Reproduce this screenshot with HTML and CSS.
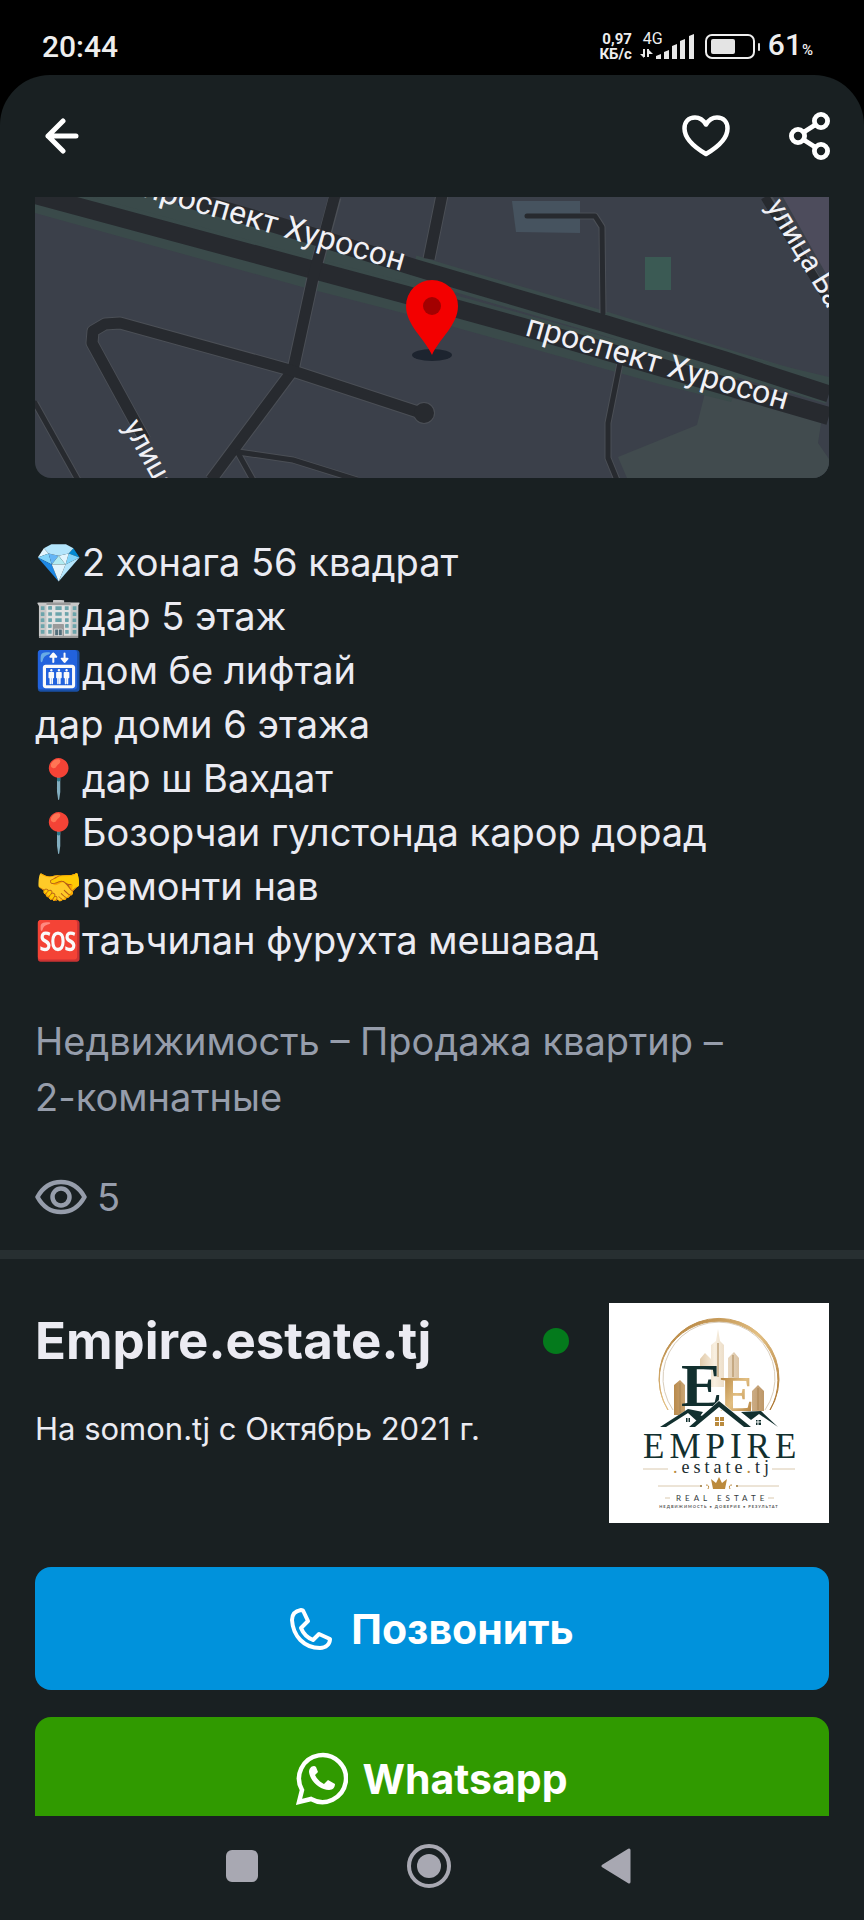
FILE: index.html
```html
<!DOCTYPE html>
<html lang="ru">
<head>
<meta charset="utf-8">
<meta name="viewport" content="width=device-width, initial-scale=1">
<title>Empire.estate.tj</title>
<link rel="stylesheet" href="styles.css">
</head>
<body>
<div class="screen">
  <header class="status">
    <time class="clock">20:44</time>
    <div class="indicators">
      <div class="speed"><span>0,97</span><span>КБ/с</span></div>
      <div class="network">
        <span class="network-type">4G</span>
        <svg class="signal" width="54" height="26" viewBox="0 0 54 26" aria-hidden="true">
          <path d="M4 15v8M8 15v8" stroke="#e8e8e8" stroke-width="2"/>
          <path d="M0 20h4v4zM8 15l5 5H8z" fill="#e8e8e8"/>
          <path d="M16 22l5-2v5h-5zM24 18l5-2v9h-5zM32 12l5-2v15h-5zM40 7l5-2v20h-5zM49 2l5-2v25h-5z" fill="#e8e8e8"/>
        </svg>
      </div>
      <svg class="battery" width="56" height="26" viewBox="0 0 56 26" aria-label="Заряд">
        <rect x="1" y="1" width="48" height="23" rx="6" fill="none" stroke="#eee" stroke-width="2"/>
        <rect x="6" y="5" width="24" height="15" rx="2" fill="#e4e4e4"/>
        <rect x="53" y="9" width="2" height="8" rx="1" fill="#e4e4e4"/>
      </svg>
      <div class="charge">61<span>%</span></div>
    </div>
  </header>

  <div class="app">
    <nav class="toolbar">
      <button class="icon-button" type="button" aria-label="Назад">
        <svg width="34" height="36" viewBox="0 0 34 36"><path d="M18 3L3 18l15 15M3 18h28" fill="none" stroke="#fff" stroke-width="5" stroke-linecap="round" stroke-linejoin="round"/></svg>
      </button>
      <div class="toolbar-actions">
        <button class="icon-button" type="button" aria-label="В избранное">
          <svg width="48" height="42" viewBox="0 0 48 42"><path d="M24 9.500C21 4.500 17 2.500 13 2.500 6.500 2.500 2.500 7 2.500 13.500 2.500 24 12 32 24 39 36 32 45.500 24 45.500 13.500 45.500 7 41.500 2.500 35 2.500 31 2.500 27 4.500 24 9.500z" fill="none" stroke="#fff" stroke-width="4.500" stroke-linejoin="round"/></svg>
        </button>
        <button class="icon-button" type="button" aria-label="Поделиться">
          <svg width="42" height="48" viewBox="0 0 42 48"><g fill="none" stroke="#fff" stroke-width="4.800"><circle cx="32" cy="9" r="6.600"/><circle cx="9" cy="24" r="6.600"/><circle cx="32" cy="39" r="6.600"/><path d="M15 20l11-7M15 28l11 7"/></g></svg>
        </button>
      </div>
    </nav>

    <main class="content">
      <section class="ad">
        <svg class="map" viewBox="0 0 794 281" preserveAspectRatio="xMidYMid slice" role="img" aria-label="Карта">
          <rect width="794" height="281" fill="#3b404a"/>
          <path d="M670 196L662 228 583 260 592 281H794V262L783 246 787 220z" fill="#414b4e"/>
          <path d="M748 0H794V82z" fill="#4d4c5c"/>
          <path d="M477 4H545V36L481 35z" fill="#46535f"/>
          <path d="M610 60h26v33h-26z" fill="#3b5a54"/>
          <path d="M45 0H120L285 50 420 90 420 108 280 66z" fill="#3a4a4a"/>
          <path d="M0 0L275 76 372 101 488 133 628 172 700 190" fill="none" stroke="#3a4a4a" stroke-width="31"/>
          <path d="M378 70L425 84 568 126 700 167 794 195" fill="none" stroke="#3b4b4b" stroke-width="24"/>
          <path d="M640 143L794 180V192L640 150z" fill="#3a4a4a"/>
          <g fill="none" stroke="#4b4f56" stroke-linejoin="round">
            <path d="M300 0L278 81 258 173 176 283M407 -2L394 62" stroke-width="13"/>
            <path d="M110 243L57 146 58 134 70 127 85 126 255 173 386 216" stroke-width="13"/>
            <path d="M0 206L43 283M203 255L258 263 322 283M203 256L218 283M545 19H560L567 30 568 116M585 166L573 226V261L582 283" stroke-width="7"/>
            <path d="M732 0L794 105" stroke-width="10"/>
          </g>
          <circle cx="389" cy="216" r="11" fill="#4b4f56"/>
          <g fill="none" stroke="#272a2f" stroke-linejoin="round">
            <path d="M0 -2L275 72 372 98 488 130 628 171 794 219" stroke-width="18"/>
            <path d="M145 0L242 28 378 70 425 84 568 126 690 163 794 197" stroke-width="17"/>
            <path d="M300 -2L278 81 258 173 176 283M407 -2L394 62" stroke-width="11"/>
            <path d="M110 243L57 146 58 134 70 127 85 126 255 173 386 216" stroke-width="11"/>
            <path d="M0 206L43 283M203 255L258 263 322 283M203 256L218 283M492 19H560L567 30 568 116M585 166L573 226V261L582 283" stroke-width="5" stroke-linecap="round"/>
            <path d="M730 0L794 105" stroke-width="9"/>
          </g>
          <circle cx="389" cy="216" r="10" fill="#272a2f"/>
          <g class="street" fill="#f1f1f6">
            <text class="street-major" transform="translate(367 74) rotate(16)" text-anchor="end">проспект Хуросон</text>
            <text class="street-major" transform="translate(489 138) rotate(16)">проспект Хуросон</text>
            <text class="street-minor" transform="translate(731 9) rotate(59)">улица Ба</text>
            <text class="street-minor" transform="translate(88 229) rotate(61)">улица</text>
          </g>
          <ellipse cx="397" cy="158" rx="20" ry="6" fill="#1d242f"/>
          <path d="M397 158C390 142 371 128 371 109a26 26 0 0 1 52 0C423 128 404 142 397 158z" fill="#f30000"/>
          <circle cx="397" cy="109" r="9" fill="#a30000"/>
        </svg>

        <p class="description">💎2 хонага 56 квадрат<br>🏢дар 5 этаж<br>🛗дом бе лифтай<br>дар доми 6 этажа<br>📍дар ш Вахдат<br>📍Бозорчаи гулстонда карор дорад<br>🤝ремонти нав<br>🆘таъчилан фурухта мешавад</p>
        <p class="category">Недвижимость – Продажа квартир –<br>2-комнатные</p>
        <p class="views">
          <svg width="52" height="36" viewBox="0 0 52 36" aria-label="Просмотры"><g fill="none" stroke="#969dab" stroke-width="4.500"><path d="M2.500 18C8 8 16 3 26 3s18 5 23.500 15C44 28 36 33 26 33S8 28 2.500 18z" stroke-linejoin="round"/><circle cx="26" cy="18" r="8.500"/></g></svg>
          <span>5</span>
        </p>
      </section>

      <section class="seller">
        <div class="seller-card">
          <div class="seller-info">
            <div class="seller-head"><h2>Empire.estate.tj</h2><span class="online"></span></div>
            <p>На somon.tj с Октябрь 2021 г.</p>
          </div>
          <svg class="logo" width="220" height="220" viewBox="0 0 220 220" role="img" aria-label="Empire.estate.tj">
            <defs>
              <linearGradient id="gold" x1="0" y1="0" x2="1" y2="1"><stop offset="0" stop-color="#ab762f"/><stop offset=".5" stop-color="#e2bf83"/><stop offset="1" stop-color="#a8712b"/></linearGradient>
              <linearGradient id="tower" x1="0" y1="0" x2="1" y2="0"><stop offset="0" stop-color="#b98a4c"/><stop offset=".45" stop-color="#f8efe0"/><stop offset="1" stop-color="#bd9768"/></linearGradient>
            </defs>
            <rect width="220" height="220" fill="#fff"/>
            <path d="M59 107A60 60 0 1 1 161 107A59 59 0 0 0 110 18.500A58 58 0 0 0 59 107z" fill="url(#gold)" stroke="url(#gold)" stroke-width="1"/>
            <path d="M64 107A56 56 0 1 1 156 107" fill="none" stroke="#d9cdbb" stroke-width="1"/>
            <path d="M109 26l2 12 4 4v42H102V42l5-4zM119 55l6-6 5 6v20h-11zM91 56l5-6 6 6v8H91zM65 82l6-5 5 5v30H65zM143 88l6-6 6 6v20h-12z" fill="url(#tower)"/>
            <path d="M109 40v34M124 52v22M71 80v30M149 85v22" stroke="#a98453" stroke-width="1"/>
            <text class="logo-initial" x="72" y="103" font-size="62" fill="#12302f">E</text>
            <text class="logo-initial" x="111" y="108" font-size="51" fill="url(#gold)">E</text>
            <path d="M51 124L79 106 93 112 82 124 110 97 142 124 110 106 90 124H84zM132 108L152 108 170 124 150 112 142 117z" fill="#fff"/>
            <path d="M51 124L79 106 93 113 90 120 79 110 57 124zM79 106L94 109 89 116zM132 109L152 108 169 124 150 111 142 117zM80 124L110 98 142 124H135L110 104 86 124z" fill="#12302f"/>
            <path d="M106 114h4v4h-4zM111 114h4v4h-4zM106 119h4v4h-4zM111 119h4v4h-4z" fill="#b98a3e"/>
            <path d="M77 115h4v4h-4zM147 117h5v5h-5z" fill="#12302f"/>
            <path d="M147 119h5M149 117v5M79 115v4" stroke="#fff" stroke-width="1"/>
            <text class="logo-name" x="34" y="155">EMPIRE</text>
            <text class="logo-domain" x="64" y="170"><tspan fill="#b98a3e">.</tspan>estate<tspan fill="#b98a3e">.</tspan>tj</text>
            <path d="M34 166H59M163 166H186M49 183H91M129 183H170M56 195H61M159 195H165" stroke="#dac9ae" stroke-width="1"/>
            <path d="M102 176l5 4 3-6 3 6 5-4-2 10h-12z" fill="#bb8a3d"/>
            <path d="M97 182q4 0 2 4M123 182q-4 0-2 4" fill="none" stroke="#bb8a3d"/>
            <circle cx="92" cy="183" r="1" fill="#99712f"/><circle cx="128" cy="183" r="1" fill="#99712f"/>
            <text class="logo-line" x="67" y="198">REAL ESTATE</text>
            <text class="logo-motto" x="110" y="205" text-anchor="middle">НЕДВИЖИМОСТЬ • ДОВЕРИЕ • РЕЗУЛЬТАТ</text>
          </svg>
        </div>
        <div class="actions">
          <button class="action call" type="button">
            <svg width="42" height="42" viewBox="0 0 42 42"><path d="M11 2C5 3 2 7 2 12 3 28 14 40 30 40c6 0 10-4 10-9L29 26l-6 6C18 30 13 25 11 20l7-7L13 2.500Q12 2 11 2z" fill="none" stroke="#fff" stroke-width="4" stroke-linejoin="round"/></svg>
            <span>Позвонить</span>
          </button>
          <button class="action whatsapp" type="button">
            <svg width="52" height="54" viewBox="0 0 52 54"><path d="M3 50L6 38A23.500 23.500 0 1 1 15 47z" fill="none" stroke="#fff" stroke-width="4.500" stroke-linejoin="miter"/><path d="M18 14c-3 0-5 3-5 6 1 9 11 18 20 18 4 0 6-3 6-6l-7-4-4 4c-4-2-7-5-9-9l3-3-2-5q-1-1-2-1z" fill="#fff"/></svg>
            <span>Whatsapp</span>
          </button>
        </div>
      </section>
    </main>
  </div>

  <nav class="system-nav">
    <button type="button" aria-label="Недавние"><svg width="32" height="32" viewBox="0 0 32 32"><rect width="32" height="32" rx="6" fill="#a8a8b2"/></svg></button>
    <button type="button" aria-label="Домой"><svg width="44" height="44" viewBox="0 0 44 44"><circle cx="22" cy="22" r="20" fill="none" stroke="#a8a8b2" stroke-width="4"/><circle cx="22" cy="22" r="12" fill="#a8a8b2"/></svg></button>
    <button type="button" aria-label="Назад"><svg width="30" height="38" viewBox="0 0 30 38"><path d="M2 19L28 3v32z" fill="#a8a8b2" stroke="#a8a8b2" stroke-width="3" stroke-linejoin="round"/></svg></button>
  </nav>
</div>
</body>
</html>
```
FILE: styles.css
```css
* { box-sizing: border-box; }
body { margin: 0; background: #000; color: #ebebf2; font-family: Inter, "Noto Sans", sans-serif; }
h2, p { margin: 0; }
svg { display: block; flex: none; }
button { margin: 0; padding: 0; border: 0; background: none; color: inherit; font: inherit; cursor: pointer; }

.screen { display: flex; flex-direction: column; height: 100vh; background: #000; }

.status { display: flex; flex: none; justify-content: space-between; align-items: center; height: 75px; padding: 19px 51px 0 42px; font-family: Roboto, sans-serif; color: #eee; }
.clock { font-size: 30px; line-height: 36px; font-weight: 500; }
.indicators { display: flex; align-items: center; }
.speed { display: flex; flex-direction: column; align-items: flex-end; margin-right: 8px; font-size: 15px; line-height: 15px; font-weight: 700; }
.network { position: relative; margin-right: 11px; }
.network-type { position: absolute; left: 3px; top: -3px; font-size: 16px; line-height: 16px; }
.battery { margin-right: 7px; }
.charge { font-size: 30px; line-height: 36px; font-weight: 500; }
.charge span { font-size: 15px; }

.app { display: flex; flex: 1; flex-direction: column; min-height: 0; border-radius: 50px 50px 0 0; background: #192022; overflow: hidden; }
.toolbar { display: flex; flex: none; justify-content: space-between; align-items: center; height: 122px; padding: 0 33px 0 45px; }
.toolbar-actions { display: flex; align-items: center; gap: 59px; }

.content { flex: 1; min-height: 0; overflow: hidden; }
.ad { display: flex; flex-direction: column; padding: 0 35px 25px; border-bottom: 9px solid #272f31; }
.map { width: 100%; height: 281px; border-radius: 0 0 16px 16px; }
.street { font-family: Roboto, sans-serif; }
.street-major { font-size: 32px; }
.street-minor { font-size: 29px; }
.description { margin-top: 57px; font-size: 38px; line-height: 54px; }
.category { margin-top: 46px; color: #969dab; font-size: 38px; line-height: 56px; }
.views { display: flex; align-items: center; gap: 10px; margin-top: 44px; color: #969dab; font-size: 38px; line-height: 56px; }

.seller { padding: 44px 35px 0; }
.seller-card { display: flex; justify-content: space-between; gap: 40px; }
.seller-info { flex: 1; min-width: 0; padding-top: 6px; }
.seller-head { display: flex; justify-content: space-between; align-items: center; }
.seller h2 { font-size: 51px; line-height: 64px; font-weight: 700; }
.online { width: 26px; height: 26px; border-radius: 50%; background: #047a1c; }
.seller p { margin-top: 34px; font-size: 31px; line-height: 44px; }
.logo-initial { font-family: "Liberation Serif", serif; font-weight: 700; }
.logo-name { font-family: "Liberation Serif", serif; font-size: 35px; letter-spacing: 5px; fill: #12302f; }
.logo-domain { font-family: "Liberation Serif", serif; font-size: 18px; letter-spacing: 4px; fill: #1b2d30; }
.logo-line { font-family: Lato, sans-serif; font-size: 8px; letter-spacing: 4px; fill: #333b3c; }
.logo-motto { font-family: Lato, "Noto Sans", sans-serif; font-size: 4px; letter-spacing: 1px; font-weight: 700; fill: #555; }

.actions { display: flex; flex-direction: column; gap: 27px; margin-top: 44px; }
.action { display: flex; justify-content: center; align-items: center; width: 100%; height: 123px; border-radius: 16px; color: #fff; font-size: 41px; line-height: 48px; font-weight: 700; }
.call { gap: 19px; background: #0092dc; }
.whatsapp { gap: 14px; background: #309a00; }

.system-nav { display: flex; flex: none; justify-content: center; gap: 107px; height: 104px; padding: 0 6px 4px 0; background: #192022; }
.system-nav button { display: flex; justify-content: center; align-items: center; width: 80px; }
```
